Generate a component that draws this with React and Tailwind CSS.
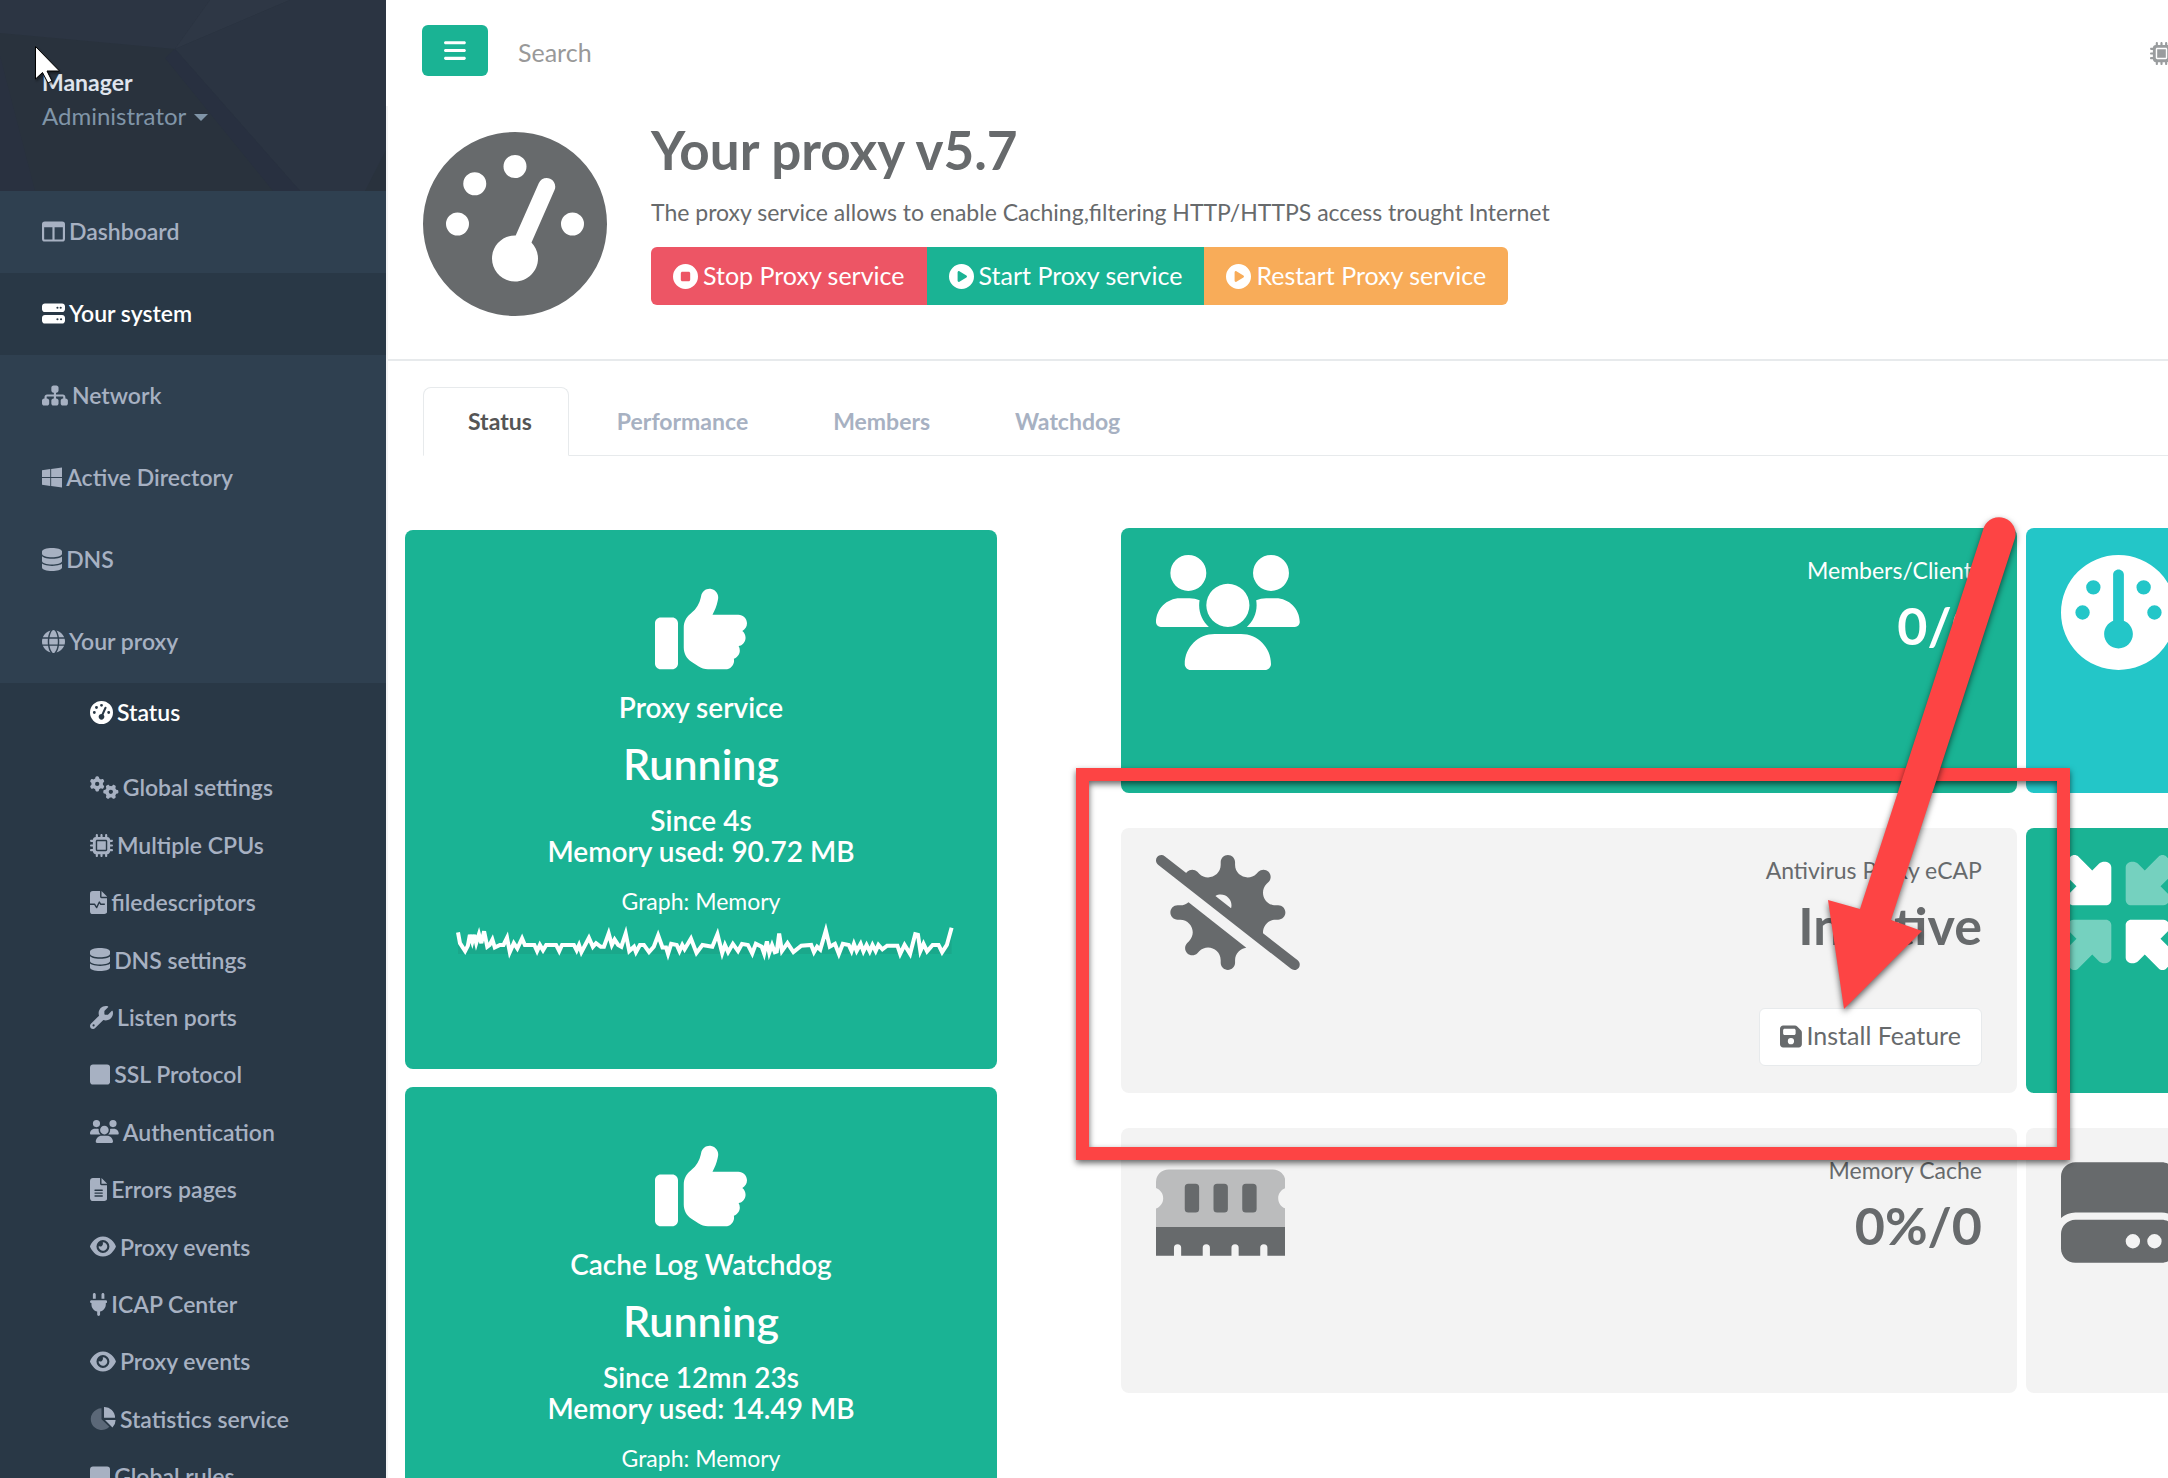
import {
  FaBars,
  FaCirclePlay,
  FaCircleStop,
  FaDatabase,
  FaEye,
  FaFileLines,
  FaFloppyDisk,
  FaGauge,
  FaGaugeHigh,
  FaGears,
  FaGlobe,
  FaHardDrive,
  FaMicrochip,
  FaPlug,
  FaServer,
  FaSitemap,
  FaSquare,
  FaThumbsUp,
  FaUsers,
  FaVirusSlash,
  FaWindows,
  FaWrench,
} from "react-icons/fa6";

function ColumnsIcon({ className }) {
  return (
    <svg viewBox="0 0 512 512" fill="currentColor" fillRule="evenodd" className={className}>
      <path d="M64 32H448a64 64 0 0 1 64 64V416a64 64 0 0 1-64 64H64a64 64 0 0 1-64-64V96a64 64 0 0 1 64-64zM48 160V416a20 20 0 0 0 20 20H232V160zM280 160V436H444a20 20 0 0 0 20-20V160z" />
    </svg>
  );
}

function FileWaveIcon({ className }) {
  return (
    <svg viewBox="0 0 384 512" fill="currentColor" className={className}>
      <path d="M64 0H224V128a32 32 0 0 0 32 32H384V448a64 64 0 0 1-64 64H64a64 64 0 0 1-64-64V64A64 64 0 0 1 64 0zM256 0V128H384z" />
      <path
        d="M0 296H104L148 370L208 246L240 296H330"
        fill="none"
        stroke="#293846"
        strokeWidth="30"
        strokeLinejoin="round"
      />
    </svg>
  );
}

function PieIcon({ className }) {
  return (
    <svg viewBox="0 0 576 512" fill="currentColor" className={className}>
      <path opacity=".4" d="M256 30A241 241 0 1 0 430 440L256 272z" />
      <path d="M312 0A240 240 0 0 1 557 240H312zM334 290H571A240 240 0 0 1 500 455z" />
    </svg>
  );
}

function MemoryIcon({ className }) {
  return (
    <svg viewBox="0 0 576 512" fill="currentColor" className={className}>
      <path
        opacity=".4"
        d="M56 64H520a56 56 0 0 1 56 56V147C557 154 544 171 544 192S557 231 576 238V320H0V238C19 231 32 213 32 192S19 154 0 147V120A56 56 0 0 1 56 64z"
      />
      <path d="M144 128h32a16 16 0 0 1 16 16v96a16 16 0 0 1-16 16h-32a16 16 0 0 1-16-16v-96a16 16 0 0 1 16-16zM272 128h32a16 16 0 0 1 16 16v96a16 16 0 0 1-16 16h-32a16 16 0 0 1-16-16v-96a16 16 0 0 1 16-16zM400 128h32a16 16 0 0 1 16 16v96a16 16 0 0 1-16 16h-32a16 16 0 0 1-16-16v-96a16 16 0 0 1 16-16z" />
      <path d="M0 320H576V448H496V413a16 16 0 0 0-32 0V448H368V413a16 16 0 0 0-32 0V448H240V413a16 16 0 0 0-32 0V448H112V413a16 16 0 0 0-32 0V448H0z" />
    </svg>
  );
}

function CompressIcon({ className }) {
  const arrow =
    "M139 69L77 7C68-2 52-2 43 7L7 43C-2 52-2 68 7 77L69 139L38 170C23 188 30 224 56 224H200C213 224 224 213 224 200V56C224 30 188 23 170 38z";
  return (
    <svg viewBox="0 0 512 512" fill="currentColor" className={className}>
      <path d={arrow} />
      <path d={arrow} transform="rotate(180 256 256)" />
      <path d={arrow} opacity=".4" transform="rotate(90 256 256)" />
      <path d={arrow} opacity=".4" transform="rotate(270 256 256)" />
    </svg>
  );
}

// ratio follows each glyph's own viewBox, the icon package makes them all square
const menu = [
  { label: "Dashboard", icon: ColumnsIcon, ratio: "aspect-square" },
  { label: "Your system", icon: FaServer, ratio: "aspect-square", active: true },
  { label: "Network", icon: FaSitemap, ratio: "aspect-[9/8]" },
  { label: "Active Directory", icon: FaWindows, ratio: "aspect-[7/8]" },
  { label: "DNS", icon: FaDatabase, ratio: "aspect-[7/8]" },
  { label: "Your proxy", icon: FaGlobe, ratio: "aspect-square" },
];

const submenu = [
  { label: "Global settings", icon: FaGears, ratio: "aspect-[5/4]" },
  { label: "Multiple CPUs", icon: FaMicrochip, ratio: "aspect-square" },
  { label: "filedescriptors", icon: FileWaveIcon, ratio: "aspect-[3/4]" },
  { label: "DNS settings", icon: FaDatabase, ratio: "aspect-[7/8]" },
  { label: "Listen ports", icon: FaWrench, ratio: "aspect-square" },
  { label: "SSL Protocol", icon: FaSquare, ratio: "aspect-[7/8]" },
  { label: "Authentication", icon: FaUsers, ratio: "aspect-[5/4]" },
  { label: "Errors pages", icon: FaFileLines, ratio: "aspect-[3/4]" },
  { label: "Proxy events", icon: FaEye, ratio: "aspect-[9/8]" },
  { label: "ICAP Center", icon: FaPlug, ratio: "aspect-[3/4]" },
  { label: "Proxy events", icon: FaEye, ratio: "aspect-[9/8]" },
  { label: "Statistics service", icon: PieIcon, ratio: "aspect-[9/8]" },
  { label: "Global rules", icon: FaSquare, ratio: "aspect-[7/8]" },
];

const tabs = ["Status", "Performance", "Members", "Watchdog"];

const sparkline =
  "0,15 5,45 18,67 25,52 30,22 36,42 41,22 46,45 53,20 59,45 66,12 74,55 80,50 87,35 93,57 106,50 115,50 124,30 131,70 141,45 150,60 162,32 169,50 193,50 200,67 207,50 215,65 223,50 248,50 256,67 263,50 293,50 300,65 306,50 312,70 331,30 341,55 349,45 361,55 369,55 381,18 389,50 396,35 405,50 413,55 424,18 433,67 445,55 450,70 460,50 470,50 483,70 495,55 506,23 517,57 526,57 531,75 539,47 553,50 560,67 567,50 573,62 589,32 603,72 618,50 643,55 656,20 668,73 675,50 683,70 695,47 708,67 718,47 733,50 744,74 753,47 768,55 774,74 781,40 787,72 794,50 801,70 806,68 812,18 819,67 833,45 848,70 868,52 893,50 900,70 908,55 916,63 930,10 940,55 953,47 963,75 973,47 988,50 995,67 1001,47 1008,67 1018,47 1025,68 1033,50 1041,68 1048,50 1056,67 1063,50 1073,62 1085,52 1111,52 1118,75 1129,50 1143,75 1156,20 1163,22 1169,67 1177,47 1186,68 1200,50 1215,50 1224,70 1236,50 1248,2";

function MenuLink({ item, className }) {
  const Icon = item.icon;
  return (
    <a href="#" className={`flex items-center gap-1 text-[23px] font-semibold ${className}`}>
      <Icon className={`h-[23px] w-auto shrink-0 ${item.ratio}`} />
      {item.label}
    </a>
  );
}

function Sidebar() {
  return (
    <nav className="w-[386px] shrink-0 bg-[#293846]">
      <div className="relative h-[191px] bg-[#29323d] pl-[42px] pt-[66px]">
        <svg
          viewBox="0 0 386 191"
          preserveAspectRatio="none"
          className="absolute inset-0 h-full w-full"
        >
          <path d="M0 33L175 49L210 0H0z" fill="#2c3543" />
          <path d="M175 49L210 0H290z" fill="#2e3745" />
          <path d="M175 49L290 0H386V191H300z" fill="#2b3442" />
          <path d="M165 58L175 49L300 191H273z" fill="#283040" />
          <path d="M0 56L35 191H0z" fill="#293140" />
          <path d="M386 150V191H365z" fill="#29323d" />
        </svg>
        <div className="relative leading-[33px]">
          <div className="text-[23px] font-bold text-[#dfe4ed]">Manager</div>
          <button type="button" className="flex items-center gap-2 text-[24px] text-[#8095a8]">
            Administrator
            <span className="mt-1 border-x-[7px] border-t-[7px] border-x-transparent border-t-[#8095a8]" />
          </button>
        </div>
      </div>

      <div className="bg-[#2f4050]">
        {menu.map((item) => (
          <MenuLink
            key={item.label}
            item={item}
            className={`h-[82px] pb-[2px] pl-[42px] ${
              item.active ? "bg-[#293846] text-white" : "text-[#a7b1c2]"
            }`}
          />
        ))}
      </div>

      <div className="pl-[90px]">
        <MenuLink
          item={{ label: "Status", icon: FaGaugeHigh, ratio: "aspect-square" }}
          className="mb-[18px] h-[58px] text-white"
        />
        <div className="grid h-[746px] auto-rows-fr">
          {submenu.map((item, i) => (
            <MenuLink key={i} item={item} className="text-[#a7b1c2]" />
          ))}
        </div>
      </div>
    </nav>
  );
}

function TopBar() {
  return (
    <div className="flex h-[106px] items-start pl-9 pt-[25px]">
      <button
        type="button"
        aria-label="Toggle menu"
        className="flex h-[51px] w-[66px] items-center justify-center rounded-md bg-[#1ab394] text-white"
      >
        <FaBars className="aspect-[7/8] h-[25px] w-auto" />
      </button>
      <input
        type="text"
        aria-label="Search"
        placeholder="Search"
        className="ml-[30px] h-[54px] flex-1 text-[25px] outline-none placeholder:text-[#999]"
      />
      <div className="mt-[17px] w-[18px] overflow-hidden text-[#999c9e]">
        <FaMicrochip className="h-[23px] w-[23px]" />
      </div>
    </div>
  );
}

function ActionButton({ icon: Icon, className, children }) {
  return (
    <button
      type="button"
      className={`flex h-[58px] items-center gap-[5px] px-[22px] text-[25px] text-white ${className}`}
    >
      <Icon className="h-[25px] w-auto" />
      {children}
    </button>
  );
}

function PageHeader() {
  return (
    <header className="flex h-[255px] gap-11 border-b-2 border-[#e7eaec] pl-[35px]">
      <FaGaugeHigh className="mt-[26px] h-[184px] w-[184px] shrink-0" />
      <div className="pt-3">
        <h1 className="text-[53px] font-bold leading-[64px]">Your proxy v5.7</h1>
        <p className="mt-3 text-[23px] leading-[36px]">
          The proxy service allows to enable Caching,filtering HTTP/HTTPS access trought Internet
        </p>
        <div className="mt-[17px] flex">
          <ActionButton icon={FaCircleStop} className="rounded-l-md bg-[#ed5565]">
            Stop Proxy service
          </ActionButton>
          <ActionButton icon={FaCirclePlay} className="bg-[#1ab394]">
            Start Proxy service
          </ActionButton>
          <ActionButton icon={FaCirclePlay} className="rounded-r-md bg-[#f8ac59]">
            Restart Proxy service
          </ActionButton>
        </div>
      </div>
    </header>
  );
}

function Tabs() {
  return (
    <div role="tablist" className="ml-[35px] mt-[26px] flex h-[69px] border-b border-[#e7eaec]">
      {tabs.map((tab, i) => (
        <button
          key={tab}
          type="button"
          role="tab"
          aria-selected={i === 0}
          className={`-mb-px mr-[3px] rounded-t-lg border pl-11 pr-9 text-[23px] font-bold ${
            i === 0
              ? "border-[#e7eaec] border-b-white bg-white text-[#555]"
              : "border-transparent text-[#a7b1c2]"
          }`}
        >
          {tab}
        </button>
      ))}
    </div>
  );
}

function ServiceCard({ name, since, memory }) {
  return (
    <section className="h-[539px] rounded-lg bg-[#1ab394] pt-[53px] text-center text-white">
      <FaThumbsUp className="mx-auto h-[92px] w-auto" />
      <h3 className="mt-[17px] text-[28px] font-semibold leading-[31px]">{name}</h3>
      <h2 className="mt-[18px] text-[43px] font-semibold leading-[46px]">Running</h2>
      <p className="mt-[18px] text-[28px] font-semibold leading-[31px]">
        Since {since}
        <br />
        Memory used: {memory}
      </p>
      <div className="mt-[18px] text-[23px] leading-[33px]">Graph: Memory</div>
      <div className="mt-[9px] pl-[53px] pr-[45px]">
        <svg
          viewBox="0 0 1249 78"
          preserveAspectRatio="none"
          className="h-7 w-full overflow-visible"
        >
          <polygon points={`0,75 ${sparkline} 1248,75`} fill="#1aa88b" />
          <polyline
            points={sparkline}
            fill="none"
            stroke="#fff"
            strokeWidth="4"
            vectorEffect="non-scaling-stroke"
          />
        </svg>
      </div>
    </section>
  );
}

function Widget({ icon: Icon, ratio, label, value, className, children }) {
  return (
    <section
      className={`flex h-[265px] items-start justify-between rounded-lg px-[35px] pt-[27px] ${className}`}
    >
      <Icon className={`h-[115px] w-auto shrink-0 ${ratio}`} />
      <div className="flex flex-col items-end">
        <span className="text-[23px] leading-[31px]">{label}</span>
        <h2 className="mt-[10px] text-[52px] font-bold leading-[58px]">{value}</h2>
        {children}
      </div>
    </section>
  );
}

function Dashboard() {
  return (
    <div className="flex items-start pl-[17px] pt-[72px]">
      <div className="mt-[2px] flex w-[592px] shrink-0 flex-col gap-[18px]">
        <ServiceCard name="Proxy service" since="4s" memory="90.72 MB" />
        <ServiceCard name="Cache Log Watchdog" since="12mn 23s" memory="14.49 MB" />
      </div>
      <div className="ml-[124px] min-w-0 flex-1">
        <div className="grid w-[172%] grid-cols-2 gap-x-[9px] gap-y-[35px]">
          <Widget
            icon={FaUsers}
            ratio="aspect-[5/4]"
            label="Members/Clients"
            value="0/0"
            className="bg-[#1ab394] text-white"
          />
          <Widget icon={FaGauge} ratio="aspect-square" className="bg-[#23c6c8] text-white" />
          <Widget
            icon={FaVirusSlash}
            ratio="aspect-[5/4]"
            label="Antivirus Proxy eCAP"
            value="Inactive"
            className="bg-[#f3f3f3]"
          >
            <button
              type="button"
              className="mt-[54px] flex h-[58px] items-center gap-[5px] rounded-md border border-[#e7eaec] bg-white px-5 pb-[2px] text-[25px]"
            >
              <FaFloppyDisk className="aspect-[7/8] h-[25px] w-auto" />
              Install Feature
            </button>
          </Widget>
          <Widget icon={CompressIcon} ratio="aspect-square" className="bg-[#1ab394] text-white" />
          <Widget
            icon={MemoryIcon}
            ratio="aspect-[9/8]"
            label="Memory Cache"
            value="0%/0"
            className="bg-[#f3f3f3]"
          />
          <Widget icon={FaHardDrive} ratio="aspect-square" className="bg-[#f3f3f3]" />
        </div>
      </div>
    </div>
  );
}

// callout frame, arrow and mouse pointer drawn over the page
function Annotations() {
  return (
    <div className="pointer-events-none absolute left-0 top-0" aria-hidden="true">
      <div className="absolute left-[1076px] top-[768px] h-[392px] w-[994px] border-[13px] border-[#fd4444] drop-shadow-[0_3px_3px_rgba(0,0,0,0.6)]" />
      <svg
        width="220"
        height="520"
        viewBox="1810 506 220 520"
        className="absolute left-[1810px] top-[506px] max-w-none drop-shadow-[0_3px_3px_rgba(0,0,0,0.6)]"
      >
        <path
          d="M1984 527A16.500 16.500 0 0 1 2015 538L1891 920L1922 931L1844 1009L1828 900L1860 909z"
          fill="#fd4444"
        />
      </svg>
      <svg
        width="34"
        height="46"
        viewBox="32 42 34 46"
        className="absolute left-[32px] top-[42px] max-w-none drop-shadow-[1px_2px_1px_rgba(0,0,0,0.4)]"
      >
        <path
          d="M35.500 46.500V79L42.500 72.500L48 83L52 81L47 71H59.500z"
          fill="#fff"
          stroke="#000"
          strokeWidth="1"
        />
      </svg>
    </div>
  );
}

export default function App() {
  return (
    <div className="relative flex h-screen overflow-hidden bg-white font-['Lato',sans-serif] text-[#676a6c]">
      <Sidebar />
      <main className="min-w-0 flex-1">
        <TopBar />
        <div className="border-l-2 border-[#f3f3f4]">
          <PageHeader />
          <Tabs />
          <Dashboard />
        </div>
      </main>
      <Annotations />
    </div>
  );
}
